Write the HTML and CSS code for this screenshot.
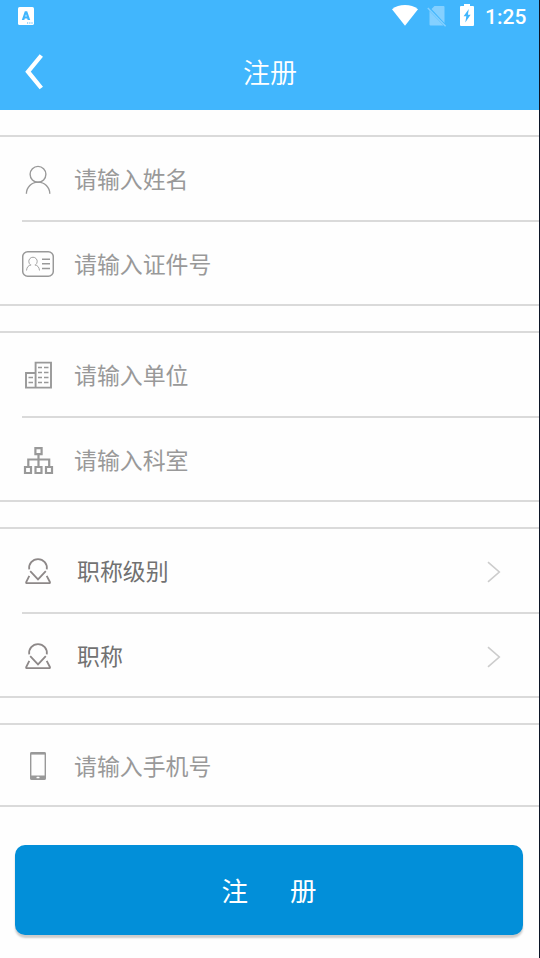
FILE: index.html
```html
<!DOCTYPE html>
<html lang="zh-CN">
<head>
    <meta charset="utf-8">
    <meta name="viewport" content="width=device-width, initial-scale=1.0">
    <title>注册</title>
    <link rel="stylesheet" href="styles.css">
</head>
<body>
    <!-- shared icons -->
    <svg class="defs" width="0" height="0">
        <symbol id="badge" viewBox="0 0 32 33">
            <path d="M7.2 15.3A8.9 8.9 0 1 1 24.8 15.3M8.2 17.2L16 25.4L23.8 17.2M7.3 21.8L4.2 28Q3.8 29.2 5 29.2H27Q28.4 29.2 27.9 28L24.7 21.8"/>
        </symbol>
        <symbol id="chevron" viewBox="0 0 14 22">
            <path d="M1 1.2L12.3 11L1 20.8"/>
        </symbol>
    </svg>
    <header>
        <div class="status">
            <svg class="ime" width="16" height="18" viewBox="0 0 16 18">
                <rect width="16" height="18" rx="1.6" fill="#fff"/>
                <path d="M3.8 13L6.8 4.2H9.2L12.2 13H9.7L9.2 11.4H6.8L6.3 13ZM7.3 9.6H8.7L8 7.2Z" fill="#41b6fd" fill-rule="evenodd"/>
                <path d="M9 16H15" stroke="#41b6fd" stroke-width="1.2" stroke-dasharray="1.2 1"/>
            </svg>
            <svg class="wifi" width="26" height="22" viewBox="0 0 26 22">
                <path d="M0 5.2Q5.5 1 13 1T26 5.2L13 21.8Z" fill="#fff"/>
            </svg>
            <svg class="sim" width="20" height="22" viewBox="0 0 20 22">
                <path d="M7.5 1H16.5Q17.5 1 17.5 2V18L4.5 4ZM2.5 6L16.5 20.5H3.5Q2.5 20.5 2.5 19.5Z" fill="#84d0ff"/>
                <path d="M.8 3L18.6 21.3" stroke="#84d0ff" stroke-width="1.5"/>
            </svg>
            <svg class="battery" width="14" height="22" viewBox="0 0 14 22">
                <path d="M4 0H10V2H13Q14 2 14 3V21Q14 22 13 22H1Q0 22 0 21V3Q0 2 1 2H4Z" fill="#fff"/>
                <path d="M8.8 5L3.6 12.3H6.3L5.3 18.5L10.6 10.8H7.9Z" fill="#41b6fd"/>
            </svg>
            <span class="time">1:25</span>
        </div>
        <div class="titlebar">
            <svg class="back" width="20" height="36" viewBox="0 0 20 36">
                <path d="M17.3 1.5L4 17.7L17.3 34" fill="none" stroke="#fff" stroke-width="4.3"/>
            </svg>
            <h1>注册</h1>
        </div>
    </header>
    <main>
        <section class="group">
            <label class="row">
                <svg class="icon thin" viewBox="0 0 32 33">
                    <circle cx="16" cy="12.3" r="7.9"/>
                    <path d="M4.4 31.8A11.7 11.7 0 0 1 27.8 31.8"/>
                </svg>
                <input type="text" placeholder="请输入姓名">
            </label>
            <label class="row">
                <svg class="icon thin" viewBox="0 0 32 33">
                    <rect x=".7" y="4.8" width="30.6" height="24.4" rx="5" stroke-width="1.5"/>
                    <path d="M8.5 17.8A4.2 4.2 0 1 1 13.5 17.8M4.5 23.5Q5 18.4 9.2 18M17.5 23.5Q17 18.4 12.8 18" stroke-width=".9"/>
                    <path d="M20 12.2H28M20 16.8H28M20 21.5H28"/>
                </svg>
                <input type="text" placeholder="请输入证件号">
            </label>
        </section>
        <section class="group">
            <label class="row">
                <svg class="icon" viewBox="0 0 32 33">
                    <path d="M13.6 29.6V4.6H29V29.6H4V15H13.6"/>
                    <path d="M16 9.5H20M22 9.5H26.5M16 14.5H20M22 14.5H26.5M16 19.5H20M22 19.5H26.5M16 24.5H20M22 24.5H26.5M6.5 19.5H11M6.5 24.5H11" stroke-width="1.4"/>
                </svg>
                <input type="text" placeholder="请输入单位">
            </label>
            <label class="row">
                <svg class="icon org" viewBox="0 0 32 33">
                    <path d="M13.4 5.2H19.6V11.2H13.4ZM3 24H9V30H3ZM13.5 24H19.5V30H13.5ZM24 24H30V30H24ZM16.5 11.2V24M6.3 24V16.5H27.2V24"/>
                </svg>
                <input type="text" placeholder="请输入科室">
            </label>
        </section>
        <section class="group">
            <div class="row select">
                <svg class="icon badge"><use href="#badge"/></svg>
                <span>职称级别</span>
                <svg class="chevron"><use href="#chevron"/></svg>
            </div>
            <div class="row select">
                <svg class="icon badge"><use href="#badge"/></svg>
                <span>职称</span>
                <svg class="chevron"><use href="#chevron"/></svg>
            </div>
        </section>
        <section class="group">
            <label class="row">
                <svg class="icon" viewBox="0 0 32 33">
                    <rect x="8.7" y="2.8" width="14.6" height="26.4" rx="1" stroke-width="1.4"/>
                    <path d="M8.5 3.5H23.5" stroke-width="2.2"/>
                    <path d="M8.5 27.5H23.5" stroke-width="4"/>
                    <rect class="home" x="14.5" y="26.7" width="3" height="1.6" rx=".6"/>
                </svg>
                <input type="tel" placeholder="请输入手机号">
            </label>
        </section>
        <button class="submit"><span>注</span><span>册</span></button>
    </main>
</body>
</html>
```

FILE: styles.css
```css
* {
    box-sizing: border-box;
}
body {
    margin: 0;
    height: 958px;
    font-family: "Noto Sans CJK SC", sans-serif;
    background-color: #fefefe;
    border-right: 1px solid #0b1426;
    overflow: hidden;
}
.defs {
    position: absolute;
}
header {
    height: 110px;
    color: white;
    background-color: #41b6fd;
}
.status {
    display: flex;
    align-items: flex-start;
    height: 34px;
    padding: 4px 12px 0 18px;
}
.ime {
    margin-top: 3px;
}
.wifi {
    margin-left: auto;
    margin-right: 9px;
}
.sim {
    margin-top: 1px;
    margin-right: 13px;
}
.battery {
    margin-right: 11px;
}
.time {
    width: 42px;
    font: 500 21px/26px Roboto, sans-serif;
    white-space: nowrap;
}
.titlebar {
    display: grid;
    grid-template-columns: 60px 1fr 60px;
    align-items: center;
    height: 76px;
}
.back {
    margin-left: 24px;
}
h1 {
    margin: 0;
    padding: 0 0 1px 1px;
    font-size: 27px;
    font-weight: 350;
    line-height: 40px;
    text-align: center;
}
.group {
    margin-top: 25px;
    border-top: 2px solid #dadada;
    border-bottom: 2px solid #dadada;
}
.row {
    display: flex;
    align-items: flex-start;
    height: 82px;
    margin-left: 22px;
    padding-top: 25px;
}
.row:first-child:not(:last-child) {
    height: 85px;
    border-bottom: 2px solid #dadada;
}
.row:only-child {
    height: 80px;
}
.icon {
    flex: none;
    width: 32px;
    height: 33px;
    margin-right: 20px;
    fill: none;
    stroke: #999;
    stroke-width: 1.9;
}
.thin {
    stroke-width: 1.4;
}
.org {
    stroke-width: 2.2;
}
.badge {
    margin-right: 23px;
    stroke: #8d8888;
    stroke-width: 1.8;
}
.icon .home {
    fill: white;
    stroke: none;
}
input {
    flex: 1;
    min-width: 0;
    height: 34px;
    margin-top: -1px;
    padding: 0;
    font: inherit;
    font-size: 22.9px;
    border: none;
    outline: none;
    background: none;
}
.row:only-child input {
    margin-top: -2px;
}
input::placeholder {
    color: #999;
}
.select span {
    flex: 1;
    font-size: 22.9px;
    line-height: 32px;
    color: #717171;
}
.chevron {
    width: 14px;
    height: 22px;
    margin: 7px 38px 0 0;
    fill: none;
    stroke: #ccc;
    stroke-width: 1.6;
}
.submit {
    display: flex;
    justify-content: center;
    align-items: center;
    gap: 42px;
    width: 508px;
    height: 90px;
    margin: 38px 0 0 15px;
    padding: 0 0 2px;
    font: inherit;
    font-size: 26.5px;
    color: white;
    background-color: #028fd9;
    border: none;
    border-radius: 10px;
    box-shadow: 0 3px 2px #ccc;
}
```
